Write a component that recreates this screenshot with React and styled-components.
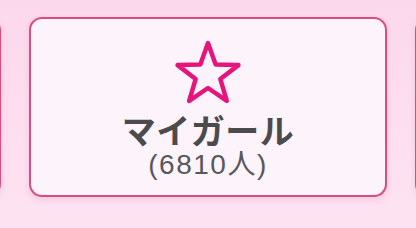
import React from "react"
import styled, { createGlobalStyle } from "styled-components"

const GlobalStyle = createGlobalStyle`
  html, body {
    margin: 0;
    padding: 0;
  }
  body {
    width: 416px;
    height: 228px;
    overflow: hidden;
    background: linear-gradient(180deg, #fcd8ec 0%, #fde3f2 100%);
    font-family: "Noto Sans CJK JP", "Noto Sans", sans-serif;
  }
`

const Track = styled.div`
  display: flex;
  justify-content: center;
  gap: 28px;
  width: 416px;
  height: 228px;
  padding-top: 17px;
  box-sizing: border-box;
  overflow: hidden;
`

const Card = styled.div`
  flex: 0 0 358px;
  height: 180px;
  box-sizing: border-box;
  border: 2.5px solid #dc4c80;
  border-radius: 13px;
  background: #fdf3fb;
  box-shadow: 0 3px 6px rgba(200, 90, 140, 0.18);
  display: flex;
  flex-direction: column;
  align-items: center;
  padding-top: 20px;
`

const Star = styled.svg`
  display: block;
  width: 72px;
  height: 68px;
`

const Title = styled.div`
  margin-top: 6px;
  font-size: 34px;
  font-weight: 700;
  line-height: 34px;
  color: #4b4a4d;
  letter-spacing: 0.5px;
`

const Count = styled.div`
  margin-top: 4px;
  font-family: "Liberation Sans", "Noto Sans CJK JP", sans-serif;
  font-size: 28px;
  font-weight: 400;
  line-height: 28px;
  letter-spacing: 1.5px;
  color: #58575a;
`

const StarIcon = () => (
  <Star viewBox="0 0 72 68">
    <polygon
      points="36,4 43.64,25.48 66.43,26.11 48.36,40.02 54.81,61.89 36,49 17.19,61.89 23.64,40.02 5.57,26.11 28.36,25.48"
      fill="none"
      stroke="#e5157c"
      strokeWidth="4.5"
      strokeLinejoin="round"
    />
  </Star>
)

const App = () => (
  <>
    <GlobalStyle />
    <Track>
      <Card />
      <Card>
        <StarIcon />
        <Title>マイガール</Title>
        <Count>(6810人)</Count>
      </Card>
      <Card />
    </Track>
  </>
)

export default App
